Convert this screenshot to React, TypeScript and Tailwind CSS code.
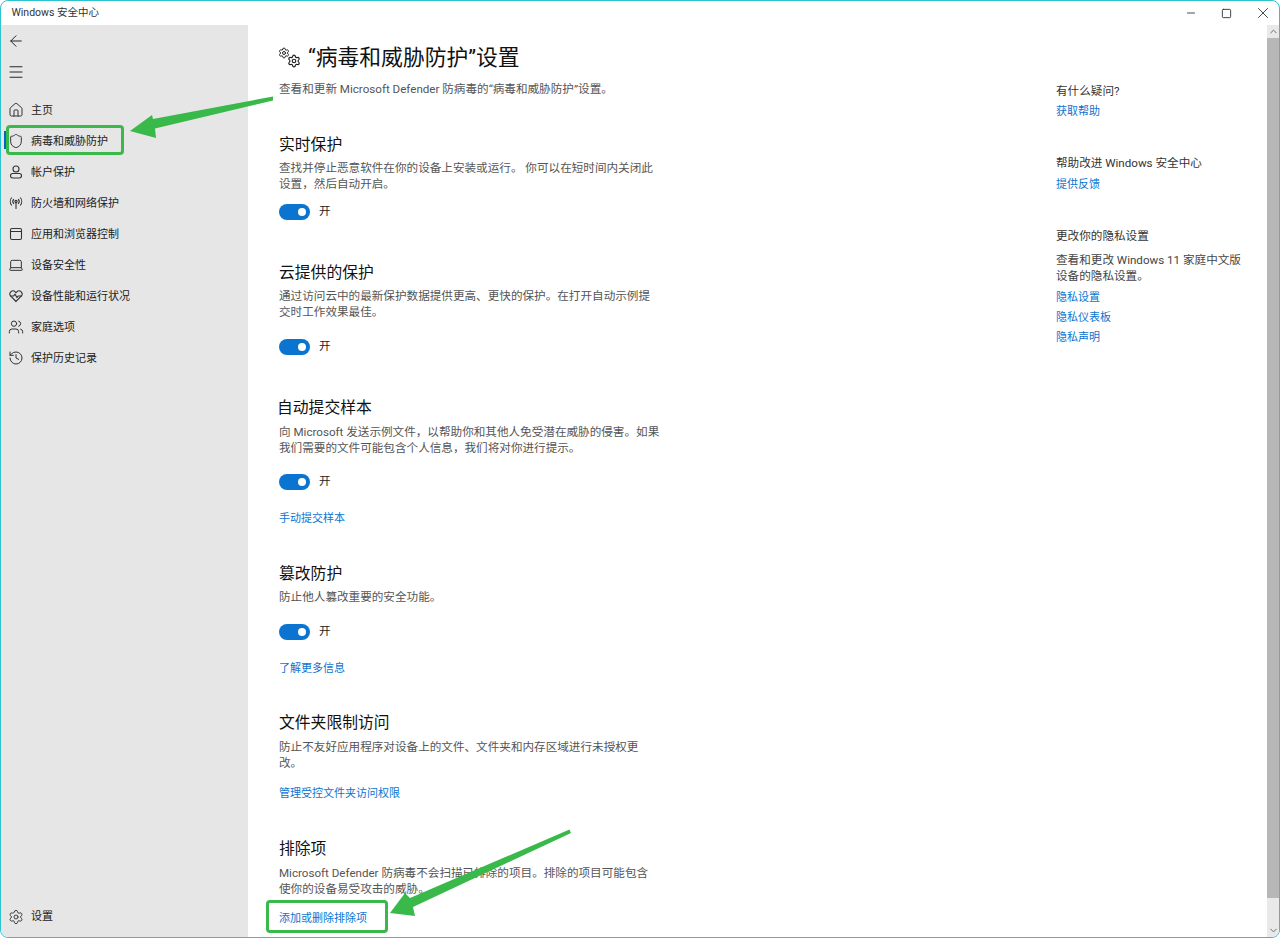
import { ArrowLeft, ChevronDown, ChevronUp, History, Home, Laptop, Menu, Minus, Settings, Shield, Square, Users, X } from "lucide-react";
import type { ReactNode } from "react";

const UserIcon = () => (
  <svg width="14" height="14" viewBox="0 0 14 14" fill="none" stroke="currentColor" strokeWidth="1.1">
    <circle cx="7" cy="4" r="3" />
    <rect x="1.5" y="8.5" width="11" height="4.5" rx="2.2" />
  </svg>
);

const AntennaIcon = () => (
  <svg width="14" height="14" viewBox="0 0 14 14" fill="none" stroke="currentColor" strokeWidth="1.1">
    <circle cx="7" cy="5.5" r="1.1" />
    <path d="M7 6.5V13" />
    <path d="M4.8 3.2a3.4 3.4 0 0 0 0 4.6M9.2 3.2a3.4 3.4 0 0 1 0 4.6" />
    <path d="M2.8 1.5a6 6 0 0 0 0 8M11.2 1.5a6 6 0 0 1 0 8" />
  </svg>
);

const BrowserIcon = () => (
  <svg width="14" height="14" viewBox="0 0 14 14" fill="none" stroke="currentColor" strokeWidth="1.1">
    <rect x="1.5" y="1.5" width="11" height="11" rx="1.5" />
    <path d="M1.5 4.5H12.5" />
  </svg>
);

const HeartIcon = () => (
  <svg width="14" height="14" viewBox="0 0 14 14" fill="none" stroke="currentColor" strokeWidth="1.1">
    <path d="M7 12.5 1.8 7.2a3.2 3.2 0 0 1 0-4.4 3.2 3.2 0 0 1 4.4 0l.8.8.8-.8a3.2 3.2 0 0 1 4.4 0 3.2 3.2 0 0 1 0 4.4Z" />
    <path d="M1 7H4.5L6 5.2 8 8.5 9.3 7H13" />
  </svg>
);

const navItems: { label: string; icon: ReactNode; active?: boolean }[] = [
  { label: "主页", icon: <Home size={16} strokeWidth={1.5} /> },
  { label: "病毒和威胁防护", icon: <Shield size={16} strokeWidth={1.5} />, active: true },
  { label: "帐户保护", icon: <UserIcon /> },
  { label: "防火墙和网络保护", icon: <AntennaIcon /> },
  { label: "应用和浏览器控制", icon: <BrowserIcon /> },
  { label: "设备安全性", icon: <Laptop size={16} strokeWidth={1.5} /> },
  { label: "设备性能和运行状况", icon: <HeartIcon /> },
  { label: "家庭选项", icon: <Users size={16} strokeWidth={1.5} /> },
  { label: "保护历史记录", icon: <History size={16} strokeWidth={1.5} /> },
];

const Heading = ({ children, className = "" }: { children: ReactNode; className?: string }) => (
  <h2 className={`h-[22px] text-[15.8px] leading-[24px] text-[#111] ${className}`}>{children}</h2>
);

const Desc = ({ children, className = "mt-[5px]" }: { children: ReactNode; className?: string }) => (
  <p className={`w-[390px] text-[11.6px] leading-[16px] text-[#555] ${className}`}>{children}</p>
);

const Toggle = ({ className = "" }: { className?: string }) => (
  <div className={`flex h-[16px] items-center gap-[9px] ${className}`}>
    <div className="flex h-[16px] w-[31px] items-center justify-end rounded-full bg-[#0a74d0] pr-[4px]">
      <div className="h-[8px] w-[8px] rounded-full bg-white" />
    </div>
    <span className="text-[11.6px] text-[#222]">开</span>
  </div>
);

const TextLink = ({ children, className = "" }: { children: ReactNode; className?: string }) => (
  <a className={`block h-[16px] text-[11px] leading-[18px] text-[#0a74d0] ${className}`}>{children}</a>
);

export default function App() {
  return (
    <div className="relative flex h-screen flex-col overflow-hidden rounded-[8px] border-[1.5px] border-[#2cc3cf] bg-white font-['Roboto','Noto_Sans_CJK_SC',sans-serif]">
      {/* Title bar */}
      <div className="flex h-[24px] shrink-0 items-center justify-between text-[#333]">
        <span className="pl-[10.5px] text-[10.5px]">Windows 安全中心</span>
        <div className="-mr-[1.5px] flex items-center">
          <span className="flex w-[36px] justify-center"><Minus size={12} strokeWidth={1.8} /></span>
          <span className="flex w-[36px] justify-center"><Square size={11} strokeWidth={2} /></span>
          <span className="flex w-[36px] justify-center"><X size={18} strokeWidth={1.2} /></span>
        </div>
      </div>

      <div className="flex min-h-0 flex-1">
        {/* Sidebar */}
        <aside className="flex w-[247px] shrink-0 flex-col bg-[#e6e6e6] text-[#222]">
          <div className="flex h-[31px] items-center pl-[6px] pt-[1px]">
            <ArrowLeft size={18} strokeWidth={1.3} />
          </div>
          <div className="flex h-[31px] items-center pl-[6px]">
            <Menu size={18} strokeWidth={1.3} />
          </div>
          <nav className="mt-[7px] flex flex-col">
            {navItems.map((item) => (
              <div key={item.label} className="relative flex h-[31px] items-center pl-[7px]">
                {item.active && <div className="absolute left-[3px] top-[6px] h-[18px] w-[2px] bg-[#0067c0]" />}
                <span className="flex w-[16px] justify-center text-[#333]">{item.icon}</span>
                <span className="ml-[7px] pt-[3px] text-[11px] text-[#222]">{item.label}</span>
              </div>
            ))}
          </nav>
          <div className="mt-auto mb-[5px] flex h-[31px] items-center pl-[7px]">
            <Settings size={16} strokeWidth={1.4} className="text-[#333]" />
            <span className="ml-[7px] pt-[2px] text-[11px]">设置</span>
          </div>
        </aside>

        {/* Main column */}
        <main className="w-[808px] shrink-0 pl-[31px]">
          <div className="mt-[16px] flex h-[34px] items-center">
            <div className="relative h-[21px] w-[21px] shrink-0 text-[#222]">
              <Settings size={12} strokeWidth={2} className="absolute -left-[1px] -top-[1px]" />
              <Settings size={14} strokeWidth={2} className="absolute bottom-[1px] -right-[1px]" />
            </div>
            <h1 className="ml-[8px] text-[21.8px] leading-[34px] text-[#111]">“病毒和威胁防护”设置</h1>
          </div>
          <p className="mt-[6px] text-[11.6px] leading-[16px] text-[#555]">查看和更新 Microsoft Defender 防病毒的“病毒和威胁防护”设置。</p>

          <Heading className="mt-[36px]">实时保护</Heading>
          <Desc>查找并停止恶意软件在你的设备上安装或运行。 你可以在短时间内关闭此<br />设置，然后自动开启。</Desc>
          <Toggle className="mt-[12px]" />

          <Heading className="mt-[41px]">云提供的保护</Heading>
          <Desc>通过访问云中的最新保护数据提供更高、更快的保护。在打开自动示例提<br />交时工作效果最佳。</Desc>
          <Toggle className="mt-[19px]" />

          <Heading className="mt-[41px] -ml-[2px]">自动提交样本</Heading>
          <Desc className="mt-[6px]">向 Microsoft 发送示例文件，以帮助你和其他人免受潜在威胁的侵害。如果<br />我们需要的文件可能包含个人信息，我们将对你进行提示。</Desc>
          <Toggle className="mt-[18px]" />
          <TextLink className="mt-[20px]">手动提交样本</TextLink>

          <Heading className="mt-[36px]">篡改防护</Heading>
          <Desc>防止他人篡改重要的安全功能。</Desc>
          <Toggle className="mt-[19px]" />
          <TextLink className="mt-[20px]">了解更多信息</TextLink>

          <Heading className="mt-[35px]">文件夹限制访问</Heading>
          <Desc className="mt-[6px]">防止不友好应用程序对设备上的文件、文件夹和内存区域进行未授权更<br />改。</Desc>
          <TextLink className="mt-[14px]">管理受控文件夹访问权限</TextLink>

          <Heading className="mt-[36px]">排除项</Heading>
          <Desc className="mt-[6px]">Microsoft Defender 防病毒不会扫描已排除的项目。排除的项目可能包含<br />使你的设备易受攻击的威胁。</Desc>
          <TextLink className="mt-[13px]">添加或删除排除项</TextLink>
        </main>

        {/* Right column */}
        <section className="w-[211px] shrink-0 pt-[58px] text-[11.6px] leading-[16px] text-[#333]">
          <p>有什么疑问?</p>
          <TextLink className="mt-[4px]">获取帮助</TextLink>
          <p className="mt-[36px]">帮助改进 Windows 安全中心</p>
          <TextLink className="mt-[5px]">提供反馈</TextLink>
          <p className="mt-[36px]">更改你的隐私设置</p>
          <p className="mt-[8px] w-[190px] text-[#444]">查看和更改 Windows 11 家庭中文版设备的隐私设置。</p>
          <TextLink className="mt-[5px]">隐私设置</TextLink>
          <TextLink className="mt-[4px]">隐私仪表板</TextLink>
          <TextLink className="mt-[4px]">隐私声明</TextLink>
        </section>

        {/* Scrollbar */}
        <div className="ml-auto flex w-[12px] shrink-0 flex-col items-center bg-[#e9e9e9] text-[#666]">
          <ChevronUp size={11} strokeWidth={2} className="my-[1px]" />
          <div className="h-[860px] w-full bg-[#b7b7b7]" />
          <ChevronDown size={11} strokeWidth={2} className="mt-auto mb-[1px]" />
        </div>
      </div>

      {/* Annotations drawn over the screenshot */}
      <div className="absolute left-[4.5px] top-[123.5px] h-[30px] w-[118px] rounded-[4px] border-[3px] border-[#38b94a]" />
      <div className="absolute left-[264.5px] top-[898.5px] h-[33px] w-[122px] rounded-[4px] border-[3px] border-[#38b94a]" />
      <svg className="pointer-events-none absolute -left-[1.5px] -top-[1.5px]" width="1280" height="938" viewBox="0 0 1280 938">
        <polygon points="273,96.5 153,119 152,115 130,131 156,138 155,128.5 273,100.5" fill="#38b94a" />
        <polygon points="569.5,829.5 410,898 405,893 390,913 415,916 413,907 571,833" fill="#38b94a" />
      </svg>
    </div>
  );
}
